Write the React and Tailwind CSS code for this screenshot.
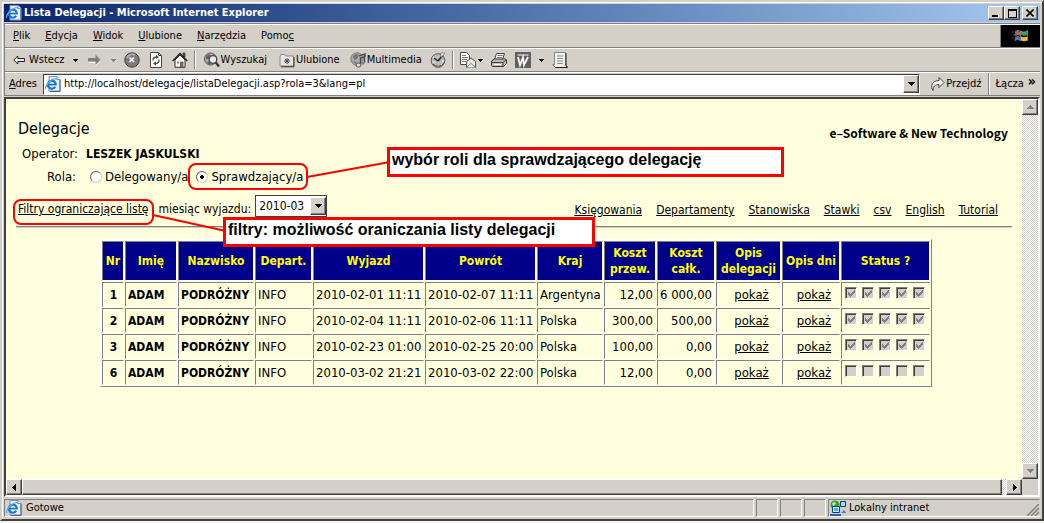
import React, { useState } from 'react'

const menuItems = [
  { before: '', key: 'P', after: 'lik' },
  { before: '', key: 'E', after: 'dycja' },
  { before: '', key: 'W', after: 'idok' },
  { before: '', key: 'U', after: 'lubione' },
  { before: '', key: 'N', after: 'arzędzia' },
  { before: 'Pomo', key: 'c', after: '' },
]

const pageLinks = ['Księgowania', 'Departamenty', 'Stanowiska', 'Stawki', 'csv', 'English', 'Tutorial']

const columns = [
  { label: 'Nr', width: 'w-[22px]' },
  { label: 'Imię', width: 'w-[52px]' },
  { label: 'Nazwisko', width: 'w-[76px]' },
  { label: 'Depart.', width: 'w-[57px]' },
  { label: 'Wyjazd', width: 'w-[111px]' },
  { label: 'Powrót', width: 'w-[111px]' },
  { label: 'Kraj', width: 'w-[66px]' },
  { label: 'Koszt przew.', width: 'w-[52px]' },
  { label: 'Koszt całk.', width: 'w-[58px]' },
  { label: 'Opis delegacji', width: 'w-[65px]' },
  { label: 'Opis dni', width: 'w-[58px]' },
  { label: 'Status ?', width: 'w-[89px]' },
]

const rows = [
  { nr: 1, from: '2010-02-01 11:11', to: '2010-02-07 11:11', country: 'Argentyna', travel: '12,00', total: '6 000,00', done: true },
  { nr: 2, from: '2010-02-04 11:11', to: '2010-02-06 11:11', country: 'Polska', travel: '300,00', total: '500,00', done: true },
  { nr: 3, from: '2010-02-23 01:00', to: '2010-02-25 20:00', country: 'Polska', travel: '100,00', total: '0,00', done: true },
  { nr: 6, from: '2010-03-02 21:21', to: '2010-03-02 22:00', country: 'Polska', travel: '12,00', total: '0,00', done: false },
]

const raised = 'border border-t-white border-l-white border-r-[#404040] border-b-[#404040] bg-[#d4d0c8] shadow-[inset_-1px_-1px_0_#808080]'
const track = 'bg-[repeating-conic-gradient(#d4d0c8_0_25%,#fff_0_50%)] bg-[length:2px_2px]'

const Arrow = ({ dir = 'down', color = '#000' }) => {
  const shapes = {
    down: 'M0 1h7v1h-1v1h-1v1h-1v1h-1v-1h-1v-1h-1v-1h-1z',
    up: 'M3 1h1v1h1v1h1v1h1v1h-7v-1h1v-1h1v-1h1z',
    left: 'M5 0v7h-1v-1h-1v-1h-1v-1h-1v-1h1v-1h1v-1h1v-1z',
    right: 'M2 0v7h1v-1h1v-1h1v-1h1v-1h-1v-1h-1v-1h-1v-1z',
  }
  return (
    <svg className="h-[7px] w-[7px] shrink-0" viewBox="0 0 7 7" shapeRendering="crispEdges" aria-hidden="true">
      <path d={shapes[dir]} fill={color} />
    </svg>
  )
}

const SmallArrow = ({ color = '#000' }) => (
  <svg className="h-[5px] w-[5px] shrink-0" viewBox="0 0 5 5" shapeRendering="crispEdges" aria-hidden="true">
    <path d="M0 1h5v1h-1v1h-1v1h-1v-1h-1v-1h-1z" fill={color} />
  </svg>
)

const PageIcon = () => (
  <svg className="h-4 w-4 shrink-0" viewBox="0 0 16 16" aria-hidden="true">
    <path d="M4 .5h8l3 3v11.5h-11z" fill="#e8efff" stroke="#7b8fc4" />
    <path d="M15 4v11.5h-10" fill="none" stroke="#4a5a9c" />
    <path d="M12 .5v3h3" fill="#fff" stroke="#7b8fc4" />
    <path d="M10.8 8.700a4 4 0 1 0-.6 2.100" fill="none" stroke="#1272cc" strokeWidth="2.100" />
    <path d="M4 8.600h7.500" stroke="#1272cc" strokeWidth="1.700" />
    <path d="M.8 13c-1.200-2 2-6.500 6-9 3-1.800 5-1.700 5.200-.4" fill="none" stroke="#52b1ee" strokeWidth="1.200" />
  </svg>
)

const BackIcon = () => (
  <svg className="h-3 w-3 shrink-0" viewBox="0 0 12 12" aria-hidden="true">
    <path d="M.8 6l4-4v2.500h6.700v3h-6.700v2.500z" fill="#e8e8e8" stroke="#222" />
  </svg>
)

const ForwardIcon = () => (
  <svg className="h-3 w-[13px] shrink-0" viewBox="0 0 13 12" aria-hidden="true">
    <path d="M1 8.500h7v3l5-5" fill="none" stroke="#fff" />
    <path d="M0 4h7.500v-3.500l5 5.500-5 5v-3.500h-7.500z" fill="#808080" />
  </svg>
)

const StopIcon = () => (
  <svg className="h-4 w-4" viewBox="0 0 16 16" aria-hidden="true">
    <circle cx="8" cy="8" r="7.200" fill="#7c7c7c" stroke="#3a3a3a" />
    <path d="M3 6a5.500 5.500 0 0 1 8-3" fill="none" stroke="#bbb" strokeWidth="1.500" />
    <path d="M5.500 5.500l4.500 4.500M10 5.500l-4.500 4.500" stroke="#fff" strokeWidth="1.700" />
  </svg>
)

const RefreshIcon = () => (
  <svg className="h-4 w-4" viewBox="0 0 16 16" aria-hidden="true">
    <path d="M2.500.5h8l3 3v12h-11z" fill="#fff" stroke="#444" />
    <path d="M10.500.5v3h3" fill="none" stroke="#444" />
    <path d="M5 8.500c0-3 2-3.500 3.500-3.500M11 7.500c0 3-2 4-3.500 4" fill="none" stroke="#555" strokeWidth="1.400" />
    <path d="M8 2.800l3 2.200-3 2.200zM8 9.300l-3 2.200 3 2.200z" fill="#555" />
  </svg>
)

const HomeIcon = () => (
  <svg className="h-4 w-4" viewBox="0 0 16 16" aria-hidden="true">
    <path d="M11 1h2v4h-2z" fill="#666" stroke="#222" strokeWidth=".7" />
    <path d="M3 8l5-5 5 5v7.300h-10z" fill="#f5f5f5" stroke="#333" />
    <path d="M.7 9l7.300-7.500 7.300 7.500" fill="none" stroke="#222" strokeWidth="1.400" />
    <path d="M8.500 10h2.500v5.300h-2.500z" fill="#777" stroke="#333" strokeWidth=".6" />
    <path d="M5 9.500h2v2h-2z" fill="#888" />
  </svg>
)

const SearchIcon = () => (
  <svg className="h-4 w-4 shrink-0" viewBox="0 0 16 16" aria-hidden="true">
    <circle cx="6.500" cy="7" r="6" fill="#aaa" stroke="#555" />
    <path d="M2 4l3-2 2 2-2 3-3 0zM3 10l3-1 1 3-2 1z" fill="#666" />
    <circle cx="9" cy="7.500" r="3.800" fill="#e9e9e9" stroke="#444" strokeWidth="1.300" />
    <path d="M11.800 10.500l3.200 4" stroke="#333" strokeWidth="2.300" />
  </svg>
)

const FavoritesIcon = () => (
  <svg className="h-4 w-4 shrink-0" viewBox="0 0 16 16" aria-hidden="true">
    <path d="M1 4l1-1.500h4l1 1.500h7.500v10h-13.500z" fill="#e5e5e5" stroke="#888" />
    <path d="M15 5v9.800h-13" fill="none" stroke="#333" />
    <path d="M8 6v6M5 9h6M6 7l4 4M10 7l-4 4" stroke="#444" />
  </svg>
)

const MediaIcon = () => (
  <svg className="h-4 w-4 shrink-0" viewBox="0 0 16 16" aria-hidden="true">
    <circle cx="7" cy="7" r="6.200" fill="#aaa" stroke="#777" />
    <path d="M3 4l3-2 3 1-2 4-3 1zM2 9l4 1 1 3" fill="#777" />
    <path d="M9 4l6-2v2.500l-4.500 1.500v7M14.500 3v8" fill="none" stroke="#444" strokeWidth="1.300" />
    <ellipse cx="8.500" cy="13" rx="2.500" ry="2" fill="#ddd" stroke="#555" />
    <ellipse cx="13" cy="11" rx="1.800" ry="1.500" fill="#888" />
  </svg>
)

const HistoryIcon = () => (
  <svg className="h-4 w-4" viewBox="0 0 16 16" aria-hidden="true">
    <circle cx="8" cy="8.500" r="6.800" fill="#bbb" stroke="#555" />
    <path d="M3 5l3 2M2.500 10h2M8 13v2M11 12l1 1M12 9h2" stroke="#fff" strokeWidth="1.200" />
    <path d="M8 9l-4-3M8 9l5-6" stroke="#222" strokeWidth="1.500" />
    <path d="M11 1l4 0-4 4.500z" fill="#fff" stroke="#555" strokeWidth=".6" />
    <path d="M3 12c3 3 8 3 11-1" fill="none" stroke="#444" />
  </svg>
)

const MailIcon = () => (
  <svg className="h-4 w-4" viewBox="0 0 16 16" aria-hidden="true">
    <path d="M.5.500h6l3 3v9h-9z" fill="#fff" stroke="#444" />
    <path d="M2 3.500h4M2 5.500h6M2 7.500h5M2 9.500h4" stroke="#777" />
    <path d="M6.500 9.500l4.500-3.500 4.500 3.500v6h-9z" fill="#e6e6e6" stroke="#555" />
    <path d="M6.500 15.500l4.500-4 4.500 4" fill="#fff" stroke="#555" strokeWidth=".8" />
  </svg>
)

const PrintIcon = () => (
  <svg className="h-4 w-4" viewBox="0 0 16 16" aria-hidden="true">
    <path d="M5.500 1.500h8l-2 6h-8z" fill="#fff" stroke="#444" />
    <path d="M6.500 3.500h5M6 5.500h5" stroke="#777" />
    <path d="M.5 9l3-2h11l1 1v3.500l-3 3h-11l-1-1z" fill="#bbb" stroke="#333" />
    <path d="M1 10.500h11l3-2.500M12 10.500v4" fill="none" stroke="#444" />
    <path d="M3 12.500h7" stroke="#fff" />
  </svg>
)

const WordIcon = () => (
  <svg className="h-4 w-4" viewBox="0 0 16 16" aria-hidden="true">
    <path d="M0 0h16v16h-16z" fill="#606060" />
    <path d="M2.500 3h11" stroke="#fff" />
    <path d="M3 5l2 8 3-7.500 1 7.500 4-8" fill="none" stroke="#fff" strokeWidth="1.800" />
  </svg>
)

const NotesIcon = () => (
  <svg className="h-4 w-4" viewBox="0 0 16 16" aria-hidden="true">
    <path d="M2.500.5h11v13l2 2h-12l-3-3h2z" fill="#f0f0f0" stroke="#888" />
    <path d="M14 1v12l1.500 2.500h-12" fill="none" stroke="#222" />
    <path d="M5 4h6M5 6.500h6M5 9h6M5 11.500h6" stroke="#888" />
  </svg>
)

const GoIcon = () => (
  <svg className="h-4 w-4 shrink-0" viewBox="0 0 16 16" aria-hidden="true">
    <path d="M3 14.500c-3-4-1-10 6-10v-3l5 5-5 5v-3c-4 0-6 2-6 6z" fill="#f2f2f2" stroke="#333" strokeWidth=".9" />
  </svg>
)

const FlagIcon = () => (
  <svg className="h-4 w-5" viewBox="0 0 20 16" aria-hidden="true">
    <path d="M1 4h2M2 7h2M1 10h2M3 12h2" stroke="#555" />
    <path d="M4 4c2-1.500 4-1.500 5 0v4c-1-1.500-3-1.500-5 0z" fill="#c0604c" />
    <path d="M10 3c2 1 4 1 6 0v4c-2 1-4 1-6 0z" fill="#37a045" />
    <path d="M4 9c2-1.500 4-1.500 5 0v4c-1-1.500-3-1.500-5 0z" fill="#4478c4" />
    <path d="M10 8.500c2 1 4 1 6 0v4c-2 1-4 1-6 0z" fill="#f0c020" />
    <path d="M4 4c2-2 4-2 6-.5s4 1 6.500-1M9.500 3v10M16.500 2.500v10.500" fill="none" stroke="#999" strokeWidth=".8" />
  </svg>
)

const IntranetIcon = () => (
  <svg className="h-4 w-4 shrink-0" viewBox="0 0 16 16" aria-hidden="true">
    <circle cx="5" cy="5" r="4.500" fill="#2fa32f" />
    <path d="M2 3l3-1 1 2-3 2z" fill="#b7efb2" />
    <path d="M10.500 1.500h5v5h-5z" fill="#a9d8ff" stroke="#123b82" />
    <path d="M2.500 6.500h7v6h-7z" fill="#d5e6ff" stroke="#123b82" />
    <path d="M4 8h4v3h-4z" fill="#23c3f3" />
    <path d="M0 14h11v2h-11z" fill="#2c5fae" />
    <path d="M11 13l3-3 2 3z" fill="#3a80d8" />
  </svg>
)

const StatusBox = ({ checked, label }) => (
  <input
    type="checkbox"
    disabled
    checked={checked}
    readOnly
    aria-label={label}
    className="h-3 w-3 appearance-none border border-t-[#808080] border-l-[#808080] border-r-white border-b-white bg-[#d4d0c8] shadow-[inset_1px_1px_0_#404040] [grid-area:1/1]"
  />
)

const Status = ({ nr, done }) => (
  <div className="flex gap-[5px] pb-[3px] pl-px">
    {[1, 2, 3, 4, 5].map((step) => (
      <span key={step} className="grid h-3 w-3 place-items-center">
        <StatusBox checked={done} label={`Delegacja ${nr}, status ${step}`} />
        {done && (
          <svg className="pointer-events-none z-10 h-[7px] w-[7px] [grid-area:1/1]" viewBox="0 0 7 7" shapeRendering="crispEdges" aria-hidden="true">
            <path d="M0 2h1v1h1v1h1v-1h1v-1h1v-1h1v-1h1v3h-1v1h-1v1h-1v1h-1v1h-1v-1h-1v-1h-1z" fill="#808080" />
          </svg>
        )}
      </span>
    ))}
  </div>
)

const Callout = ({ children, className }) => (
  <div className={`absolute h-[30px] border-[3px] border-[#f00] bg-white px-[2px] font-['Liberation_Sans',sans-serif] text-base leading-5 font-bold whitespace-nowrap ${className}`}>
    {children}
  </div>
)

const App = () => {
  const [role, setRole] = useState('checker')
  const [month, setMonth] = useState('2010-03')
  const [address, setAddress] = useState('http://localhost/delegacje/listaDelegacji.asp?rola=3&lang=pl')

  const iconButton = 'flex h-5 items-center'
  const radio = 'h-3 w-3 appearance-none rounded-full border border-t-[#606060] border-l-[#606060] border-r-[#d4d0c8] border-b-[#d4d0c8] bg-white checked:bg-[radial-gradient(circle,#000_2px,#fff_2px)]'
  const cell = 'h-[25px] border border-t-[#808080] border-l-[#808080] border-r-white border-b-white px-[2px] py-0 whitespace-nowrap'

  return (
    <div className="flex min-h-screen flex-col bg-white font-['DejaVu_Sans_Condensed','DejaVu_Sans',sans-serif] text-[11px] leading-4 text-black">
      <div className="flex flex-1 flex-col border-2 border-t-[#d4d0c8] border-l-[#d4d0c8] border-r-[#404040] border-b-[#404040] bg-[#d4d0c8] p-[2px] shadow-[inset_1px_1px_0_#fff]">

        <header className="flex h-[18px] shrink-0 items-center bg-linear-to-r from-[#0a246a] to-[#a6caf0] px-[2px]">
          <PageIcon />
          <h1 className="flex-1 pl-[2px] text-[11px] font-bold text-white">Lista Delegacji - Microsoft Internet Explorer</h1>
          <div className="flex">
            <button type="button" aria-label="Minimalizuj" className={`flex h-[14px] w-4 items-end pb-[2px] pl-[3px] ${raised}`}>
              <span className="h-[2px] w-1.5 bg-black" />
            </button>
            <button type="button" aria-label="Maksymalizuj" className={`flex h-[14px] w-4 items-center justify-center ${raised}`}>
              <span className="h-[9px] w-[9px] border border-t-2 border-black" />
            </button>
            <button type="button" aria-label="Zamknij" className={`ml-[2px] flex h-[14px] w-4 items-center justify-center ${raised}`}>
              <svg className="h-2 w-2" viewBox="0 0 8 8"><path d="M.5.500l7 7M7.500.500l-7 7" stroke="#000" strokeWidth="1.600" /></svg>
            </button>
          </div>
        </header>

        <div className="mt-px border-t border-l border-[#808080]">
          <nav className="flex h-6 items-center border-t border-b border-t-white border-b-[#808080] pl-2">
            <div className="flex flex-1 gap-[15px]">
              {menuItems.map((item) => (
                <button type="button" key={item.key}>
                  {item.before}<u>{item.key}</u>{item.after}
                </button>
              ))}
            </div>
            <span className="flex h-full w-10 items-center justify-center border-l border-[#808080] bg-black">
              <FlagIcon />
            </span>
          </nav>

          <div className="flex h-6 items-center border-t border-b border-t-white border-b-[#808080] pl-2">
            <button type="button" className={`${iconButton} gap-1`}><BackIcon />Wstecz</button>
            <button type="button" aria-label="Historia wstecz" className={`${iconButton} ml-2`}><SmallArrow /></button>
            <button type="button" aria-label="Dalej" className={`${iconButton} ml-[10px]`}><ForwardIcon /></button>
            <button type="button" aria-label="Historia dalej" className={`${iconButton} ml-[10px]`}><SmallArrow color="#808080" /></button>
            <button type="button" aria-label="Zatrzymaj" className={`${iconButton} ml-2`}><StopIcon /></button>
            <button type="button" aria-label="Odśwież" className={`${iconButton} ml-2`}><RefreshIcon /></button>
            <button type="button" aria-label="Strona główna" className={`${iconButton} ml-2`}><HomeIcon /></button>
            <span className="mr-2 ml-[6px] h-[18px] w-[2px] border-l border-[#808080] bg-white" />
            <button type="button" className={`${iconButton} gap-px`}><SearchIcon />Wyszukaj</button>
            <button type="button" className={`${iconButton} ml-3 gap-px`}><FavoritesIcon />Ulubione</button>
            <button type="button" className={`${iconButton} ml-[10px] gap-px`}><MediaIcon />Multimedia</button>
            <button type="button" aria-label="Historia" className={`${iconButton} ml-2`}><HistoryIcon /></button>
            <span className="mx-[6px] h-[18px] w-[2px] border-l border-[#808080] bg-white" />
            <button type="button" aria-label="Poczta" className={`${iconButton} gap-[2px]`}><MailIcon /><SmallArrow /></button>
            <button type="button" aria-label="Drukuj" className={`${iconButton} ml-2`}><PrintIcon /></button>
            <button type="button" aria-label="Edytuj" className={`${iconButton} ml-2 gap-2`}><WordIcon /><SmallArrow /></button>
            <button type="button" aria-label="Notatki" className={`${iconButton} ml-2`}><NotesIcon /></button>
          </div>

          <div className="flex h-6 items-center border-t border-b border-t-white border-b-[#808080] pl-1">
            <label htmlFor="address" className="w-[34px]"><u>A</u>dres</label>
            <div className="flex h-[21px] flex-1 items-center border border-t-[#404040] border-l-[#404040] border-r-white border-b-white bg-white pl-px">
              <PageIcon />
              <input
                id="address"
                className="min-w-0 flex-1 px-[3px] outline-none"
                value={address}
                onChange={(e) => setAddress(e.target.value)}
              />
              <button type="button" aria-label="Pokaż adresy" className={`flex h-[18px] w-4 items-center justify-center ${raised}`}><Arrow /></button>
            </div>
            <button type="button" className="ml-[10px] flex items-center"><GoIcon />Przejdź</button>
            <span className="ml-[6px] h-full w-[2px] border-l border-[#808080] bg-white" />
            <button type="button" className="ml-[6px] flex pr-1">Łącza<span className="ml-1 text-sm leading-[10px] font-bold">»</span></button>
          </div>
        </div>

        <div className="mt-px flex flex-1 border-2 border-t-[#404040] border-l-[#404040] border-r-white border-b-white">
          <div className="flex min-w-0 flex-1 flex-col">
            <main className="relative flex-1 bg-[#ffffde] px-[10px] text-xs">
              <div className="flex items-start justify-between pt-5 pr-1 pl-[2px]">
                <h2 className="text-base leading-5">Delegacje</h2>
                <strong className="pt-1 font-['Noto_Sans_CJK_SC',sans-serif] text-xs leading-5">e–Software &amp; New Technology</strong>
              </div>
              <p className="flex h-[22px] items-center gap-2 pl-[6px] text-[13px]">Operator: <b className="text-xs">LESZEK JASKULSKI</b></p>
              <fieldset className="flex h-6 items-center pl-[31px] text-[13px]">
                <span className="w-[43px]">Rola:</span>
                <label className="flex items-center gap-[3px]">
                  <input type="radio" name="role" className={radio} checked={role === 'delegate'} onChange={() => setRole('delegate')} />
                  Delegowany/a
                </label>
                <label className="ml-2 flex items-center gap-[3px]">
                  <input type="radio" name="role" className={radio} checked={role === 'checker'} onChange={() => setRole('checker')} />
                  Sprawdzający/a
                </label>
              </fieldset>

              <div className="mt-2 flex h-6 items-center">
                <a href="#filtry" className="ml-[2px] underline">Filtry ograniczające listę</a>
                <label htmlFor="month" className="ml-[10px]">miesiąc wyjazdu:</label>
                <span className="mb-[6px] ml-1 grid h-[22px] w-[72px] items-center border border-[#404040] bg-white">
                  <select id="month" className="h-full w-full appearance-none bg-transparent pl-[3px] text-xs outline-none [grid-area:1/1]" value={month} onChange={(e) => setMonth(e.target.value)}>
                    <option>2010-03</option>
                    <option>2010-02</option>
                  </select>
                  <span className={`pointer-events-none flex h-[18px] w-4 items-center justify-center justify-self-end [grid-area:1/1] ${raised}`}><Arrow /></span>
                </span>
                <nav className="mt-[2px] ml-auto flex gap-[14px] pr-[14px]">
                  {pageLinks.map((link) => (
                    <a href={`#${link}`} key={link} className="underline">{link}</a>
                  ))}
                </nav>
              </div>
              <hr className="mt-[5px] border-t border-b border-t-[#808080] border-b-[#d4d0c8]" />

              <div className="mt-[11px] flex justify-center pl-1">
                <table className="w-[832px] table-fixed border-separate border-spacing-[1px] border border-t-white border-l-white border-r-[#808080] border-b-[#808080] text-[13px]">
                  <thead>
                    <tr>
                      {columns.map((col) => (
                        <th key={col.label} className={`h-10 border border-t-[#808080] border-l-[#808080] border-r-white border-b-white bg-[#00008b] px-0 text-xs leading-4 text-[#ff0] ${col.width}`}>{col.label}</th>
                      ))}
                    </tr>
                  </thead>
                  <tbody>
                    {rows.map((row) => (
                      <tr key={row.nr}>
                        <td className={`${cell} text-right text-xs font-bold`}>{row.nr}&nbsp;</td>
                        <td className={`${cell} text-xs font-bold`}>ADAM</td>
                        <td className={`${cell} text-xs font-bold`}>PODRÓŻNY</td>
                        <td className={cell}>INFO</td>
                        <td className={cell}>{row.from}</td>
                        <td className={cell}>{row.to}</td>
                        <td className={cell}>{row.country}</td>
                        <td className={`${cell} text-right`}>{row.travel}</td>
                        <td className={`${cell} text-right`}>{row.total}</td>
                        <td className={`${cell} pl-2 text-center`}><a href={`#opis-${row.nr}`} className="underline">pokaż</a></td>
                        <td className={`${cell} pl-2 text-center`}><a href={`#dni-${row.nr}`} className="underline">pokaż</a></td>
                        <td className={cell}><Status nr={row.nr} done={row.done} /></td>
                      </tr>
                    ))}
                  </tbody>
                </table>
              </div>

              <svg className="pointer-events-none absolute top-0 left-0 h-40 w-[400px]" viewBox="0 0 400 160" fill="none" stroke="#f00" strokeWidth="2" aria-hidden="true">
                <rect x="183" y="65" width="118" height="25" rx="7" />
                <rect x="8" y="101" width="139" height="24" rx="7" />
                <path d="M301 78l83-15M147 116l73 16" />
              </svg>
              <Callout className="top-[48px] left-[381px] w-[397px]">wybór roli dla sprawdzającego delegację</Callout>
              <Callout className="top-[118px] left-[217px] w-[372px]">filtry: możliwość oraniczania listy delegacji</Callout>
            </main>

            <div className={`flex h-4 ${track}`}>
              <button type="button" aria-label="W lewo" className={`flex w-4 items-center justify-center ${raised}`}><Arrow dir="left" /></button>
              <div className={`mr-1 flex-1 ${raised}`} />
              <button type="button" aria-label="W prawo" className={`flex w-4 items-center justify-center ${raised}`}><Arrow dir="right" /></button>
            </div>
          </div>
          <div className={`flex w-4 flex-col ${track}`}>
            <button type="button" aria-label="W górę" className={`flex h-4 items-center justify-center ${raised}`}><Arrow dir="up" color="#808080" /></button>
            <div className="flex-1" />
            <button type="button" aria-label="W dół" className={`flex h-4 items-center justify-center ${raised}`}><Arrow dir="down" color="#808080" /></button>
            <div className="h-4 bg-[#d4d0c8]" />
          </div>
        </div>

        <footer className="mt-[2px] flex h-[18px] shrink-0 gap-[2px]">
          <div className="flex flex-1 items-center gap-1 border border-t-[#808080] border-l-[#808080] border-r-white border-b-white pl-px"><PageIcon />Gotowe</div>
          {[1, 2, 3].map((n) => (
            <div key={n} className="w-[22px] border border-t-[#808080] border-l-[#808080] border-r-white border-b-white" />
          ))}
          <div className="flex w-[212px] items-center gap-[3px] border border-t-[#808080] border-l-[#808080] border-r-transparent border-b-white pl-px">
            <IntranetIcon />
            <span className="flex-1">Lokalny intranet</span>
            <svg className="h-3 w-3 self-end" viewBox="0 0 12 12" aria-hidden="true"><path d="M0 12l12-12M4 12l8-8M8 12l4-4" stroke="#808080" strokeWidth="1.500" /></svg>
          </div>
        </footer>
      </div>
      <div className="h-[2px] shrink-0 bg-[#f4f3f1]" />
    </div>
  )
}

export default App
